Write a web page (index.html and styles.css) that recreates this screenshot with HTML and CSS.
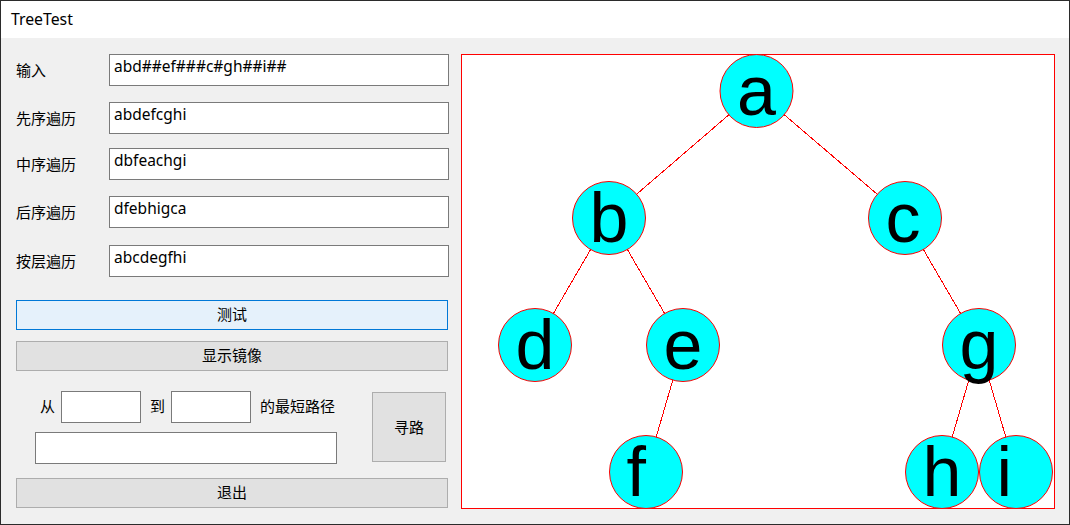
FILE: index.html
```html
<!DOCTYPE html>
<html lang="zh">
<head>
<meta charset="utf-8">
<title>TreeTest</title>
<link rel="stylesheet" href="styles.css">
</head>
<body>
<div class="window">
  <div class="titlebar">TreeTest</div>
  <div class="client">
    <div class="left">
      <div class="row">
        <div class="label">输入</div>
        <div class="textbox wide">abd##ef###c#gh##i##</div>
      </div>
      <div class="row r2">
        <div class="label">先序遍历</div>
        <div class="textbox wide">abdefcghi</div>
      </div>
      <div class="row r3">
        <div class="label">中序遍历</div>
        <div class="textbox wide">dbfeachgi</div>
      </div>
      <div class="row r4">
        <div class="label">后序遍历</div>
        <div class="textbox wide">dfebhigca</div>
      </div>
      <div class="row r5">
        <div class="label">按层遍历</div>
        <div class="textbox wide">abcdegfhi</div>
      </div>
      <div class="btn focused test">测试</div>
      <div class="btn mirror">显示镜像</div>
      <div class="path">
        <div class="path-left">
          <div class="path-row">
            <span class="plabel from">从</span>
            <div class="textbox small"></div>
            <span class="plabel to">到</span>
            <div class="textbox small"></div>
            <span class="plabel suffix">的最短路径</span>
          </div>
          <div class="textbox result"></div>
        </div>
        <div class="btn find">寻路</div>
      </div>
      <div class="btn quit">退出</div>
    </div>
    <svg class="canvas" width="594" height="455" viewBox="0 0 594 455" shape-rendering="crispEdges">
      <rect x="0.5" y="0.5" width="593" height="454" fill="#ffffff" stroke="#ff0000" stroke-width="1"/>
      <g stroke="#ff0000" stroke-width="1">
        <line x1="295.5" y1="37" x2="148" y2="164"/>
        <line x1="295.5" y1="37" x2="444" y2="164"/>
        <line x1="148" y1="164" x2="74" y2="291"/>
        <line x1="148" y1="164" x2="222" y2="291"/>
        <line x1="444" y1="164" x2="518" y2="291"/>
        <line x1="222" y1="291" x2="185" y2="418"/>
        <line x1="518" y1="291" x2="481" y2="418"/>
        <line x1="518" y1="291" x2="555" y2="418"/>
      </g>
      <g fill="#00ffff" stroke="#ff0000" stroke-width="1" shape-rendering="auto">
        <circle cx="295.5" cy="37" r="36.5"/>
        <circle cx="148" cy="164" r="36.5"/>
        <circle cx="444" cy="164" r="36.5"/>
        <circle cx="74" cy="291" r="36.5"/>
        <circle cx="222" cy="291" r="36.5"/>
        <circle cx="518" cy="291" r="36.5"/>
        <circle cx="185" cy="418" r="36.5"/>
        <circle cx="481" cy="418" r="36.5"/>
        <circle cx="555" cy="418" r="36.5"/>
      </g>
      <g class="node-text">
        <text x="276" y="61">a</text>
        <text x="128.5" y="188">b</text>
        <text x="424.5" y="188">c</text>
        <text x="54.5" y="315">d</text>
        <text x="202.5" y="315">e</text>
        <text x="498.5" y="315">g</text>
        <text x="165.5" y="442">f</text>
        <text x="461.5" y="442">h</text>
        <text x="535.5" y="442">i</text>
      </g>
    </svg>
  </div>
</div>
</body>
</html>
```

FILE: styles.css
```css
* { box-sizing: border-box; }
html, body { margin: 0; padding: 0; }
body {
  width: 1070px;
  height: 525px;
  overflow: hidden;
  background: #f0f0f0;
  font-family: "Noto Sans", "Noto Sans CJK SC", sans-serif;
}
.window {
  width: 1070px;
  height: 525px;
  border: 1px solid #2b2b2b;
  background: #f0f0f0;
  display: flex;
  flex-direction: column;
}
.titlebar {
  height: 37px;
  flex: none;
  background: #ffffff;
  color: #000;
  font-size: 15.8px;
  line-height: 37px;
  padding-left: 10px;
}
.client {
  flex: 1;
  display: flex;
  padding: 16px 0 0 15px;
  gap: 12px;
  align-items: flex-start;
}
.left {
  width: 433px;
  display: flex;
  flex-direction: column;
  font-family: "Noto Sans CJK SC", sans-serif;
  font-size: 15px;
  color: #000;
}
.row {
  display: flex;
  align-items: center;
  height: 32px;
}
.r2 { margin-top: 16px; }
.r3 { margin-top: 14px; }
.r4 { margin-top: 16px; }
.r5 { margin-top: 17px; }
.label {
  width: 93px;
  padding-bottom: 2px;
}
.textbox {
  height: 32px;
  background: #ffffff;
  border: 1px solid #7a7a7a;
  font-family: "Noto Sans", "Noto Sans CJK SC", sans-serif;
  font-size: 15.5px;
  line-height: 17px;
  padding: 3px 4px 0 4px;
  white-space: nowrap;
  overflow: hidden;
}
.wide { width: 340px; }
.btn {
  display: flex;
  align-items: center;
  justify-content: center;
  height: 30px;
  background: #e1e1e1;
  border: 1px solid #adadad;
  padding-bottom: 3px;
}
.btn.focused {
  background: #e5f1fb;
  border-color: #0078d7;
}
.test { width: 432px; margin-top: 23px; }
.mirror { width: 432px; margin-top: 11px; }
.quit { width: 432px; margin-top: 14px; }
.path {
  display: flex;
  margin-top: 20px;
  height: 73px;
}
.path-left {
  display: flex;
  flex-direction: column;
  width: 356px;
}
.path-row {
  display: flex;
  align-items: center;
  height: 32px;
}
.plabel { padding-bottom: 4px; }
.from { margin-left: 24px; margin-right: 6px; }
.to { margin-left: 9px; margin-right: 6px; }
.suffix { margin-left: 9px; }
.small { width: 80px; }
.result {
  width: 302px;
  margin-top: 9px;
  margin-left: 19px;
}
.find {
  width: 74px;
  height: 70px;
  margin-top: 1px;
  padding-bottom: 1px;
}
.canvas {
  display: block;
  flex: none;
}
.node-text text {
  font-family: "Liberation Sans", Arial, sans-serif;
  font-size: 70px;
  fill: #000000;
}
```
